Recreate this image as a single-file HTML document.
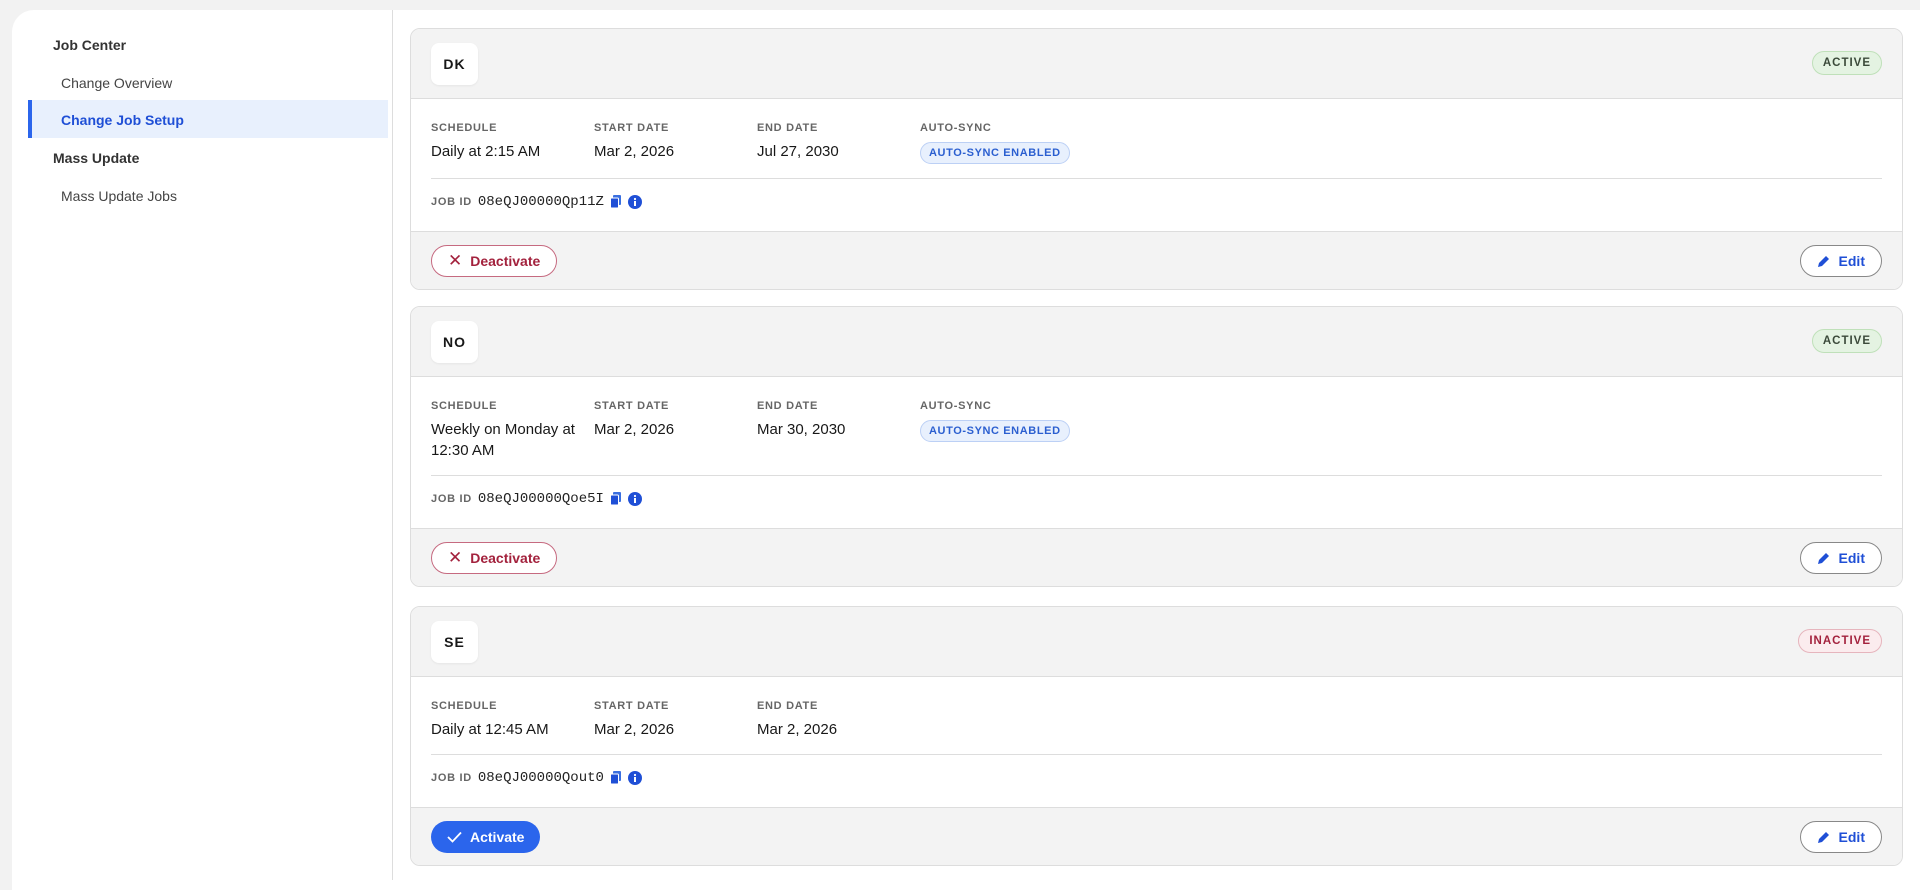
<!DOCTYPE html>
<html><head><meta charset="utf-8"><style>
*{box-sizing:border-box;margin:0;padding:0}
body{width:1920px;height:880px;background:#f2f2f2;font-family:"Liberation Sans",sans-serif;overflow:hidden;position:relative;color:#181818}
.panel{position:absolute;left:12px;top:10px;width:1908px;height:880px;background:#fff;border-top-left-radius:22px}
.side{position:absolute;left:12px;top:10px;width:381px;height:870px;border-right:1px solid #ddd}
.nav{position:absolute;font-size:14px}
.h{left:41px;font-weight:bold;color:#333}
.i{left:49px;color:#444}
.act{position:absolute;left:16px;top:90px;width:360px;height:38px;background:#e8f0fd;border-left:4px solid #2b65ec}
.card{position:absolute;left:410px;width:1493px;border:1px solid #ddd;border-radius:10px;overflow:hidden;background:#fff}
.hd{height:70px;background:#f3f3f3;border-bottom:1px solid #ddd;position:relative}
.code{position:absolute;left:20px;top:14px;width:47px;height:42px;background:#fff;border-radius:8px;font-weight:bold;font-size:14px;letter-spacing:1px;display:flex;align-items:center;justify-content:center;box-shadow:0 1px 2px rgba(0,0,0,.06)}
.badge{position:absolute;right:20px;top:22px;height:24px;padding:0 10px;border-radius:12px;font-size:11.5px;font-weight:bold;letter-spacing:1px;display:flex;align-items:center}
.on{background:#e4f3e2;border:1px solid #bfe0b9;color:#3b4a3a}
.off{background:#fbecee;border:1px solid #e6b5bd;color:#a3223d}
.bd{padding:21px 20px 0}
.row{display:flex;padding-bottom:14px;border-bottom:1px solid #ddd}
.col{width:163px}
.lb{font-size:11px;font-weight:bold;color:#666;letter-spacing:.7px;line-height:16px}
.v{font-size:15px;line-height:21px;margin-top:5px;width:150px}
.sync{display:inline-block;margin-top:6px;height:22px;line-height:20px;padding:0 8px;border-radius:11px;background:#e8f0fd;border:1px solid #bcd0f5;color:#2b5fd0;font-size:11px;font-weight:bold;letter-spacing:.6px}
.jid{padding:12px 0 19px;height:52px;display:flex;align-items:center;gap:6px}
.jid .m{font-family:"Liberation Mono",monospace;font-size:14px;color:#222}
.ft{height:58px;background:#f3f3f3;border-top:1px solid #ddd;position:relative}
.btn{position:absolute;top:13px;height:32px;border-radius:16px;display:flex;align-items:center;gap:8px;font-size:14px;font-weight:bold;padding:0 16px}
.de{left:20px;border:1px solid #c66a80;color:#a3223d;background:#fff}
.ac{left:20px;background:#2b65ec;color:#fff}
.ed{right:20px;border:1px solid #888;color:#1f4fd6;background:#fff;padding:0 16px 0 16px}
</style></head><body>
<div class="panel"></div>
<div class="side">
<div class="act"></div>
<div class="nav h" style="top:27px">Job Center</div>
<div class="nav i" style="top:65px">Change Overview</div>
<div class="nav i" style="top:102px;color:#1f4fd6;font-weight:bold">Change Job Setup</div>
<div class="nav h" style="top:140px">Mass Update</div>
<div class="nav i" style="top:178px">Mass Update Jobs</div>
</div>

<div class="card" style="top:28px">
<div class="hd"><div class="code">DK</div><div class="badge on">ACTIVE</div></div>
<div class="bd"><div class="row">
<div class="col"><div class="lb">SCHEDULE</div><div class="v">Daily at 2:15 AM</div></div>
<div class="col"><div class="lb">START DATE</div><div class="v">Mar 2, 2026</div></div>
<div class="col"><div class="lb">END DATE</div><div class="v">Jul 27, 2030</div></div>
<div class="col"><div class="lb">AUTO-SYNC</div><div class="sync">AUTO-SYNC ENABLED</div></div>
</div>
<div class="jid"><span class="lb">JOB ID</span><span class="m">08eQJ00000Qp11Z</span><svg width="12" height="13" viewBox="0 0 12 13"><rect x="3" y="0" width="8" height="10" rx="1" fill="#3a6fe0"/><rect x="0.5" y="3" width="8" height="10" rx="1" fill="#1f4fd6" stroke="#fff"/></svg><svg width="14" height="14" viewBox="0 0 14 14"><circle cx="7" cy="7" r="7" fill="#1f4fd6"/><rect x="6" y="6" width="2" height="5" fill="#fff"/><circle cx="7" cy="4" r="1.1" fill="#fff"/></svg></div></div>
<div class="ft"><div class="btn de"><span style="font-weight:normal;font-size:17px">✕</span>Deactivate</div><div class="btn ed"><svg width="14" height="14" viewBox="0 0 14 14"><path d="M1 13l1-4 7-7 3 3-7 7z" fill="#1f4fd6"/></svg>Edit</div></div>
</div>

<div class="card" style="top:306px">
<div class="hd"><div class="code">NO</div><div class="badge on">ACTIVE</div></div>
<div class="bd"><div class="row">
<div class="col"><div class="lb">SCHEDULE</div><div class="v">Weekly on Monday at 12:30 AM</div></div>
<div class="col"><div class="lb">START DATE</div><div class="v">Mar 2, 2026</div></div>
<div class="col"><div class="lb">END DATE</div><div class="v">Mar 30, 2030</div></div>
<div class="col"><div class="lb">AUTO-SYNC</div><div class="sync">AUTO-SYNC ENABLED</div></div>
</div>
<div class="jid"><span class="lb">JOB ID</span><span class="m">08eQJ00000Qoe5I</span><svg width="12" height="13" viewBox="0 0 12 13"><rect x="3" y="0" width="8" height="10" rx="1" fill="#3a6fe0"/><rect x="0.5" y="3" width="8" height="10" rx="1" fill="#1f4fd6" stroke="#fff"/></svg><svg width="14" height="14" viewBox="0 0 14 14"><circle cx="7" cy="7" r="7" fill="#1f4fd6"/><rect x="6" y="6" width="2" height="5" fill="#fff"/><circle cx="7" cy="4" r="1.1" fill="#fff"/></svg></div></div>
<div class="ft"><div class="btn de"><span style="font-weight:normal;font-size:17px">✕</span>Deactivate</div><div class="btn ed"><svg width="14" height="14" viewBox="0 0 14 14"><path d="M1 13l1-4 7-7 3 3-7 7z" fill="#1f4fd6"/></svg>Edit</div></div>
</div>

<div class="card" style="top:606px">
<div class="hd"><div class="code">SE</div><div class="badge off">INACTIVE</div></div>
<div class="bd"><div class="row">
<div class="col"><div class="lb">SCHEDULE</div><div class="v">Daily at 12:45 AM</div></div>
<div class="col"><div class="lb">START DATE</div><div class="v">Mar 2, 2026</div></div>
<div class="col"><div class="lb">END DATE</div><div class="v">Mar 2, 2026</div></div>
</div>
<div class="jid"><span class="lb">JOB ID</span><span class="m">08eQJ00000Qout0</span><svg width="12" height="13" viewBox="0 0 12 13"><rect x="3" y="0" width="8" height="10" rx="1" fill="#3a6fe0"/><rect x="0.5" y="3" width="8" height="10" rx="1" fill="#1f4fd6" stroke="#fff"/></svg><svg width="14" height="14" viewBox="0 0 14 14"><circle cx="7" cy="7" r="7" fill="#1f4fd6"/><rect x="6" y="6" width="2" height="5" fill="#fff"/><circle cx="7" cy="4" r="1.1" fill="#fff"/></svg></div></div>
<div class="ft"><div class="btn ac"><svg width="15" height="12" viewBox="0 0 15 12"><path d="M1 6l4.5 4.5L14 1.5" fill="none" stroke="#fff" stroke-width="1.8"/></svg>Activate</div><div class="btn ed"><svg width="14" height="14" viewBox="0 0 14 14"><path d="M1 13l1-4 7-7 3 3-7 7z" fill="#1f4fd6"/></svg>Edit</div></div>
</div>
</body></html>
